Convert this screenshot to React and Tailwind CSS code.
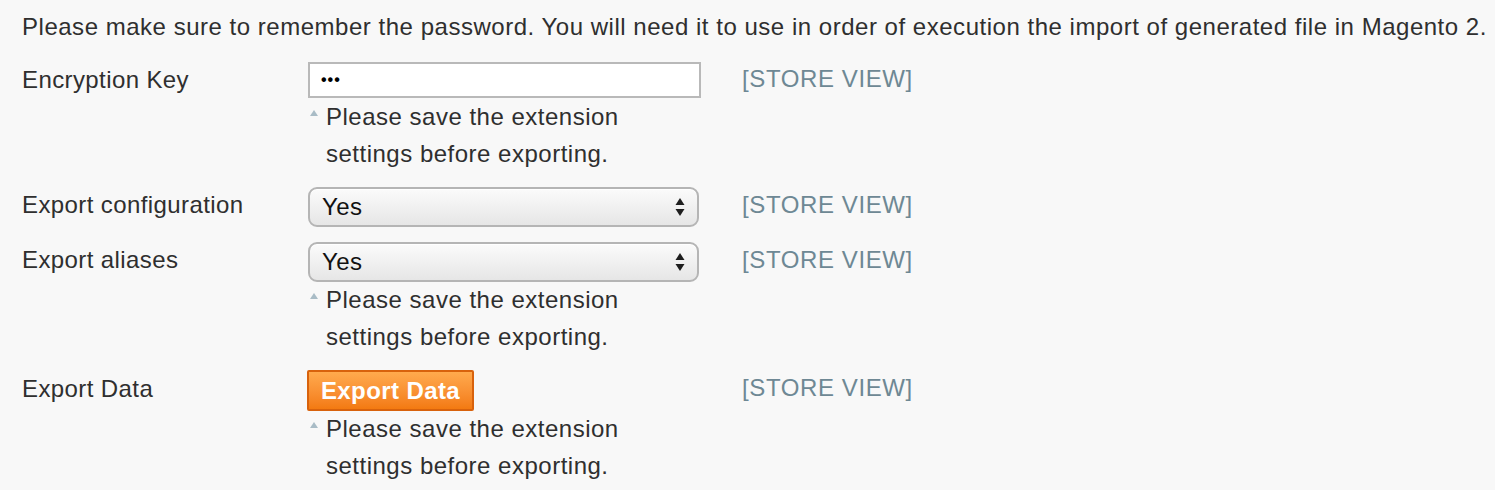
import React from "react";

const font = { fontFamily: '"Liberation Sans", Arial, Helvetica, sans-serif' };

function StoreView() {
  return (
    <div className="text-[24px] leading-[36px] text-[#6e8894] tracking-[0.6px]">[STORE VIEW]</div>
  );
}

function Note() {
  return (
    <div className="relative pl-[18px] text-[24px] leading-[36.5px] text-[#2f2f2f] tracking-[0.5px]">
      <span className="absolute left-[2px] top-[11px] w-0 h-0 border-l-[4px] border-r-[4px] border-b-[6px] border-l-transparent border-r-transparent border-b-[#a9bcc6]" />
      <div>Please save the extension</div>
      <div>settings before exporting.</div>
    </div>
  );
}

function Arrows() {
  return (
    <svg width="10" height="20" viewBox="0 0 10 20" className="shrink-0">
      <path d="M5 1 L9.5 8 L0.5 8 Z" fill="#1e1e1e" />
      <path d="M5 19 L9.5 12 L0.5 12 Z" fill="#1e1e1e" />
    </svg>
  );
}

function Select() {
  return (
    <div className="w-[391px] h-[40px] flex items-center justify-between pl-[12px] pr-[12px] rounded-[9px] border-2 border-[#b5b5b5] bg-gradient-to-b from-[#fbfbfb] to-[#e6e6e6] shadow-[inset_0_1px_0_#fff] text-[24px] text-[#111] tracking-[0.4px]">
      <span>Yes</span>
      <Arrows />
    </div>
  );
}

export default function App() {
  return (
    <div style={font} className="w-[1495px] h-[490px] bg-[#f8f8f8] text-[#2f2f2f] pl-[22px] pt-[13px] overflow-hidden tracking-[0.4px]">
      <p className="text-[24px] leading-[28px] tracking-[0.52px] whitespace-nowrap">
        Please make sure to remember the password. You will need it to use in order of execution the import of generated file in Magento 2.
      </p>

      {/* Encryption Key */}
      <div className="flex mt-[21px]">
        <div className="w-[286px] text-[24px] leading-[36px]">Encryption Key</div>
        <div className="w-[434px]">
          <div className="w-[393px] h-[36px] border-2 border-[#b9b9b9] bg-white flex items-center pl-[11px] text-[16px] leading-none text-black tracking-[1px] font-bold">
            •••
          </div>
          <div className="mt-[1px]">
            <Note />
          </div>
        </div>
        <div className="-mt-[1px]">
          <StoreView />
        </div>
      </div>

      {/* Export configuration */}
      <div className="flex mt-[15px]">
        <div className="w-[286px] text-[24px] leading-[36px]">Export configuration</div>
        <div className="w-[434px]">
          <Select />
        </div>
        <div>
          <StoreView />
        </div>
      </div>

      {/* Export aliases */}
      <div className="flex mt-[15px]">
        <div className="w-[286px] text-[24px] leading-[36px]">Export aliases</div>
        <div className="w-[434px]">
          <Select />
          <Note />
        </div>
        <div>
          <StoreView />
        </div>
      </div>

      {/* Export Data */}
      <div className="flex mt-[15px]">
        <div className="w-[286px] text-[24px] leading-[36px] pt-[1px]">Export Data</div>
        <div className="w-[434px]">
          <button className="h-[41px] w-[167px] -ml-[1px] rounded-[2px] border-2 border-[#d8620c] bg-gradient-to-b from-[#ffaa4d] to-[#f37a10] text-white font-bold text-[24px] leading-none tracking-[0.4px] flex items-center justify-center">
            Export Data
          </button>
          <Note />
        </div>
        <div>
          <StoreView />
        </div>
      </div>
    </div>
  );
}
